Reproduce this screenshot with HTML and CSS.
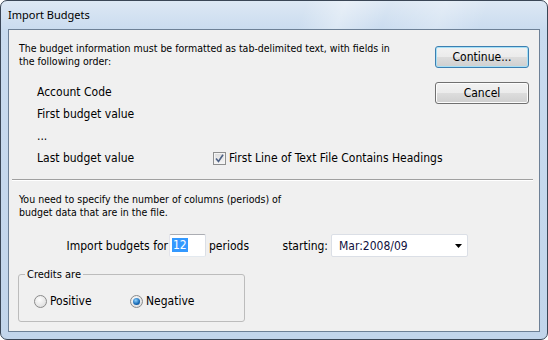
FILE: index.html
```html
<!DOCTYPE html>
<html lang="en">
<head>
  <meta charset="UTF-8" />
  <title>Import Budgets</title>
  <link rel="stylesheet" href="styles.css">
</head>
<body>
  <div class="window">
    <div class="titlebar">Import Budgets</div>

    <div class="client">
      <div class="top">
        <div class="info">
          <p class="note">The budget information must be formatted as tab-delimited text, with fields in<br>the following order:</p>
          <ul class="fields">
            <li>Account Code</li>
            <li>First budget value</li>
            <li>...</li>
            <li class="last">
              <span class="last-name">Last budget value</span>
              <label class="check">
                <span class="box">
                  <svg width="9" height="9" viewBox="0 0 9 9"><path d="M1 4.5 L3.5 7.5 L8 0.8" fill="none" stroke="#4d6185" stroke-width="1.6"/></svg>
                </span>
                First Line of Text File Contains Headings
              </label>
            </li>
          </ul>
        </div>

        <div class="actions">
          <button class="btn default">Continue...</button>
          <button class="btn">Cancel</button>
        </div>
      </div>

      <hr class="sep">

      <p class="note">You need to specify the number of columns (periods) of<br>budget data that are in the file.</p>

      <div class="periods">
        <span class="lbl-import">Import budgets for</span>
        <span class="num"><span class="sel">12</span></span>
        <span class="lbl-periods">periods</span>
        <span class="lbl-start">starting:</span>
        <div class="combo">
          <span>Mar:2008/09</span>
          <svg width="7" height="4" viewBox="0 0 7 4"><path d="M0 0 H7 L3.5 4 Z" fill="#000"/></svg>
        </div>
      </div>

      <fieldset class="credits">
        <legend>Credits are</legend>
        <label class="radio"><span class="dot"></span>Positive</label>
        <label class="radio on"><span class="dot"></span>Negative</label>
      </fieldset>
    </div>
  </div>
</body>
</html>
```

FILE: styles.css
```css
* {
  box-sizing: border-box;
}

body {
  margin: 0;
  background: #fff;
  font-family: "DejaVu Sans Condensed", "DejaVu Sans", sans-serif;
  font-stretch: condensed;
  color: #000;
}

.window {
  width: 548px;
  height: 340px;
  border: 1px solid #3a4656;
  border-radius: 7px;
  padding: 0 7px 7px 7px;
  background: linear-gradient(to bottom, #dde8f4 0, #c9dbef 30px, #c2d5eb 100%);
  display: flex;
  flex-direction: column;
}

.titlebar {
  height: 28px;
  flex: none;
  font-family: "Noto Sans", sans-serif;
  font-stretch: normal;
  font-size: 11px;
  line-height: 27px;
  color: #000;
  background: linear-gradient(110deg, transparent 0, transparent 55%, rgba(255,255,255,0.35) 62%, transparent 70%, rgba(255,255,255,0.25) 80%, transparent 88%);
  margin: 0 -7px;
  padding: 0 7px;
  border-radius: 6px 6px 0 0;
}

.client {
  flex: 1;
  background: #f0f0f0;
  border: 1px solid #6d8096;
  padding: 12px 10px 0 10px;
}

.note {
  margin: 0;
  font-size: 10.5px;
  line-height: 13px;
}

.top {
  display: flex;
  justify-content: space-between;
}

.info {
  flex: 1;
  min-width: 0;
}

.fields {
  list-style: none;
  margin: 13px 0 0 0;
  padding: 0 0 0 18px;
}

.fields li {
  height: 22px;
  line-height: 22px;
  font-size: 12px;
  white-space: nowrap;
}

.last {
  display: flex;
  align-items: center;
}

.last-name {
  width: 176px;
  flex: none;
}

.check {
  display: flex;
  align-items: center;
  gap: 3px;
}

.box {
  width: 13px;
  height: 13px;
  border: 1px solid #8e8f8f;
  background: linear-gradient(to bottom, #dcdcdc, #f6f6f6);
  display: flex;
  align-items: center;
  justify-content: center;
  box-shadow: inset 0 0 0 1px #f4f4f4;
}

.actions {
  display: flex;
  flex-direction: column;
  gap: 14px;
  margin-top: 4px;
}

.btn {
  width: 94px;
  height: 22px;
  font-family: "DejaVu Sans Condensed", "DejaVu Sans", sans-serif;
  font-stretch: condensed;
  font-size: 12px;
  color: #000;
  border: 1px solid #707070;
  border-radius: 3px;
  background: linear-gradient(to bottom, #f2f2f2 0, #ebebeb 50%, #dddddd 50%, #cfcfcf 100%);
  box-shadow: inset 0 0 0 1px #fcfcfc;
  padding: 0;
}

.btn.default {
  border-color: #3c7fb1;
  box-shadow: inset 0 0 0 1px #a6e0f6;
}

.sep {
  margin: 10px -4px 0 -7px;
  border: 0;
  border-top: 1px solid #a0a0a0;
  border-bottom: 1px solid #fff;
  height: 0;
}

.sep + .note {
  margin-top: 12px;
}

.periods {
  display: flex;
  align-items: center;
  margin-top: 15px;
  height: 23px;
  font-size: 12px;
  white-space: nowrap;
}

.lbl-import {
  width: 150px;
  text-align: right;
  padding-right: 1px;
}

.num {
  width: 37px;
  height: 23px;
  background: #fff;
  border: 1px solid #abadb3;
  border-color: #abadb3 #dbdfe6 #e3e9ef #e2e3ea;
  border-radius: 2px;
  padding: 3px 0 0 2px;
  line-height: 15px;
}

.sel {
  background: #3399ff;
  color: #fff;
  padding: 0 1px;
}

.lbl-periods {
  width: 40px;
  margin-left: 3px;
}

.lbl-start {
  width: 79px;
  text-align: right;
}

.combo {
  margin-left: 3px;
  width: 137px;
  height: 23px;
  background: #fff;
  border: 1px solid #dbdfe6;
  border-radius: 2px;
  display: flex;
  align-items: center;
  justify-content: space-between;
  padding: 0 5px 0 7px;
  color: #101040;
}

.credits {
  margin: 11px 0 0 -1px;
  width: 227px;
  height: 54px;
  border: 1px solid #bcbcbc;
  border-radius: 3px;
  padding: 0 6px;
  display: flex;
  align-items: center;
}

.credits legend {
  font-size: 11px;
  line-height: 13px;
  padding: 0 2px;
}

.radio {
  width: 96px;
  display: flex;
  align-items: center;
  gap: 3px;
  font-size: 12px;
  margin-left: 9px;
  margin-top: 0;
}

.radio + .radio {
  margin-left: 0;
}

.dot {
  width: 13px;
  height: 13px;
  border-radius: 50%;
  border: 1px solid #8b8b8b;
  background: radial-gradient(circle at 40% 35%, #fdfdfd, #d6d6d6);
  display: flex;
  align-items: center;
  justify-content: center;
}

.radio.on .dot::after {
  content: "";
  width: 7px;
  height: 7px;
  border-radius: 50%;
  background: radial-gradient(circle at 40% 35%, #8fd3ff, #1567b3 60%, #0a3d78);
}
```
